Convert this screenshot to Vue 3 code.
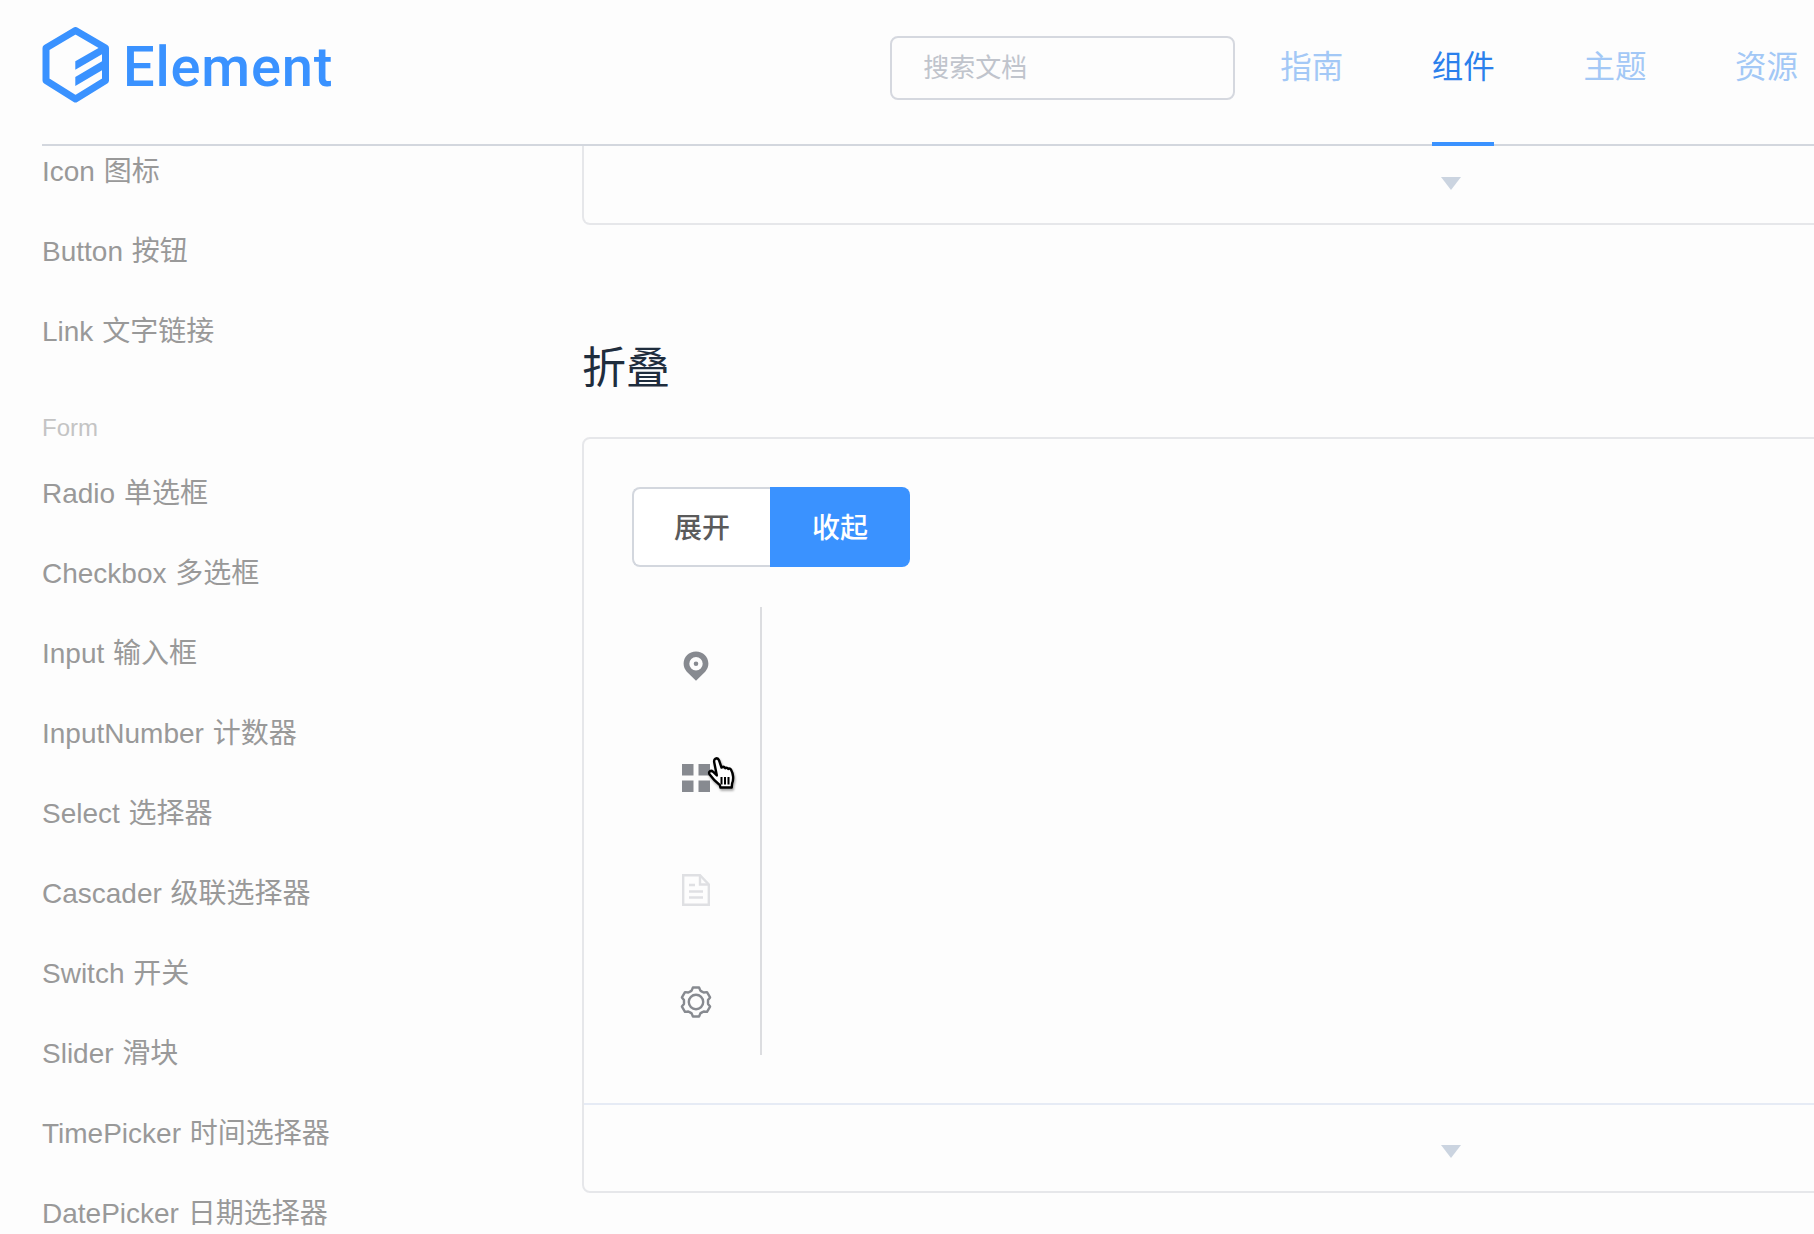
<script setup>
const before = ['Icon 图标', 'Button 按钮', 'Link 文字链接']
const form = ['Radio 单选框', 'Checkbox 多选框', 'Input 输入框', 'InputNumber 计数器', 'Select 选择器', 'Cascader 级联选择器', 'Switch 开关', 'Slider 滑块', 'TimePicker 时间选择器', 'DatePicker 日期选择器']
const nav = ['指南', '组件', '主题', '资源']
function gear() {
  const pts = []
  const n = 6
  for (let i = 0; i < n; i++) {
    const a = (i * 360) / n - 90
    const list = [[-30, 12], [-21, 12.2], [-12, 14.8], [12, 14.8], [21, 12.2]]
    for (const [d, r] of list) {
      const t = ((a + d) * Math.PI) / 180
      pts.push((16 + r * Math.cos(t)).toFixed(2) + ' ' + (16 + r * Math.sin(t)).toFixed(2))
    }
  }
  return 'M' + pts.join('L') + 'Z'
}
const gearPath = gear()
</script>

<template>
  <div class="page">
    <header class="header">
      <div class="logo">
        <svg class="hex" width="68" height="76" viewBox="42 27 68 76">
          <path d="M75.5 30.5 105.5 48V80.5L75.5 99 46 80.5V48Z" fill="none" stroke="#3a92ff" stroke-width="7" stroke-linejoin="round" />
          <path d="M75.3 61.3 102 46V54.3L75.3 69.7ZM75.3 77 102 61.3V70.3L75.3 86Z" fill="#3a92ff" />
        </svg>
        <span class="word">Element</span>
      </div>
      <div class="right">
        <div class="search">搜索文档</div>
        <nav class="nav">
          <a v-for="(n, i) in nav" :key="n" class="nav-item" :class="{ on: i === 1 }">{{ n }}</a>
        </nav>
      </div>
    </header>
    <div class="main">
      <aside class="side">
        <div class="list">
          <div v-for="t in before" :key="t" class="row">{{ t }}</div>
          <div class="group">Form</div>
          <div v-for="t in form" :key="t" class="row">{{ t }}</div>
        </div>
      </aside>
      <section class="content">
        <div class="card first">
          <div class="ctrl-top"><i class="arrow"></i></div>
        </div>
        <h3 class="title">折叠</h3>
        <div class="card">
          <div class="demo">
            <div class="btns">
              <div class="btn left">展开</div>
              <div class="btn active">收起</div>
            </div>
            <div class="menu">
              <div class="mi">
                <svg width="26" height="30" viewBox="0 0 26 30">
                  <path fill-rule="evenodd" fill="#878a90" d="M13 .5C6 .5.6 5.8.6 12.6c0 3.2 1.2 5.8 3.2 8.2L13 29.7l9.200-8.900c2-2.400 3.200-5 3.200-8.200C25.400 5.800 20 .5 13 .5ZM13 6a6.700 6.700 0 1 1 0 13.400A6.700 6.700 0 0 1 13 6ZM13 10.400a2.300 2.300 0 1 0 0 4.600 2.300 2.300 0 0 0 0-4.600Z" />
                </svg>
              </div>
              <div class="mi">
                <svg width="28" height="28" viewBox="0 0 28 28" fill="#878a90">
                  <rect x="0" y="0" width="11.500" height="11.500" />
                  <rect x="16.500" y="0" width="11.500" height="11.500" />
                  <rect x="0" y="16.500" width="11.500" height="11.500" />
                  <rect x="16.500" y="16.500" width="11.500" height="11.500" />
                </svg>
                <svg class="cursor" width="30" height="36" viewBox="0 0 30 34" preserveAspectRatio="none">
                  <path fill="#fff" stroke="#000" stroke-width="2.400" stroke-linejoin="round" d="M8.500 1.500c1.600-.6 3 .3 3.600 1.800l2.400 6.600 1-.4c1.200-.4 2.200.2 2.700 1.100 1-.6 2.300-.4 3 .6.900-.5 2.200-.2 2.800.8 1 1.700 1.900 4.400 2.100 6.600.2 2.400-.2 4.600-1 6.400l-.4 3.900H13.500l-.7-2.500C10.700 25 6 21 2.700 16.600c-1-1.300-.8-2.500.2-3.100 1-.6 2.300-.3 3.300.6l3.600 3.200L7.300 5.400c-.4-1.600 0-3.300 1.200-3.900Z" />
                  <path stroke="#000" stroke-width="2" d="M14.500 19v7M18 19v7M21.500 19v7" />
                </svg>
              </div>
              <div class="mi">
                <svg width="28" height="32" viewBox="0 0 28 32" fill="none" stroke="#dfe0e3" stroke-width="2.400">
                  <path d="M1.200 1.200H18L26.800 10.500V30.800H1.200Z" />
                  <path d="M18 1.200V10.500H26.800M7 11H13M7 17.500H21M7 23.500H21" />
                </svg>
              </div>
              <div class="mi">
                <svg width="32" height="32" viewBox="0 0 32 32" fill="none" stroke="#878a90" stroke-width="2.400">
                  <path :d="gearPath" stroke-linejoin="round" />
                  <circle cx="16" cy="16" r="7.200" />
                </svg>
              </div>
            </div>
          </div>
          <div class="ctrl"><i class="arrow"></i></div>
        </div>
      </section>
    </div>
  </div>
</template>

<style>
html, body { margin: 0; background: #fdfdfd; overflow: hidden; }
</style>

<style scoped>
.page {
  height: 1234px;
  overflow: hidden;
  background: #fdfdfd;
  font-family: "Liberation Sans", "Noto Sans CJK SC", sans-serif;
  display: flex;
  flex-direction: column;
}
.header {
  height: 146px;
  box-sizing: border-box;
  margin-left: 42px;
  border-bottom: 2px solid #d3d7de;
  display: flex;
  justify-content: space-between;
  padding-right: 17px;
  flex-shrink: 0;
}
.logo { display: flex; align-items: flex-start; padding-top: 27px; }
.hex { display: block; }
.word {
  font-family: Roboto, sans-serif;
  font-weight: 500;
  font-size: 56px;
  letter-spacing: 0.8px;
  line-height: 60px;
  margin-top: 10px;
  margin-left: 13px;
  color: #3a92ff;
}
.right { display: flex; align-items: flex-start; }
.search {
  width: 345px;
  height: 64px;
  box-sizing: border-box;
  margin-top: 36px;
  margin-right: 45px;
  padding-left: 31px;
  border: 2px solid #d5d8df;
  border-radius: 8px;
  font-size: 26px;
  line-height: 60px;
  color: #c0c4cc;
}
.nav { display: flex; gap: 89.6px; }
.nav-item {
  position: relative;
  display: block;
  width: 62px;
  height: 144px;
  font-size: 31.500px;
  line-height: 134px;
  color: #a3c8f6;
  white-space: nowrap;
}
.nav-item.on { color: #2b80ec; }
.nav-item.on::after {
  content: "";
  position: absolute;
  left: 0;
  right: 0;
  bottom: -2px;
  height: 4px;
  background: #3a92ff;
}
.main { flex: 1; min-height: 0; display: flex; }
.side {
  width: 582px;
  flex-shrink: 0;
  box-sizing: border-box;
  padding-left: 42px;
  overflow: hidden;
}
.list { margin-top: -14px; }
.row {
  height: 80px;
  line-height: 80px;
  font-size: 28px;
  word-spacing: 1px;
  color: #999;
  white-space: nowrap;
}
.group {
  height: 82px;
  box-sizing: border-box;
  padding-top: 30px;
  line-height: 52px;
  font-size: 24px;
  color: #c4c4c4;
}
.content { flex: 1; min-width: 0; overflow: hidden; }
.card {
  width: 1738px;
  box-sizing: border-box;
  border: 2px solid #e6e7ea;
  border-radius: 8px;
}
.first {
  height: 79px;
  border-top: 0;
  border-radius: 0 0 8px 8px;
}
.ctrl-top { height: 77px; display: flex; justify-content: center; padding-top: 31px; box-sizing: border-box; }
.title {
  margin: 0;
  height: 212px;
  box-sizing: border-box;
  padding-top: 112px;
  font-size: 44px;
  line-height: 64px;
  font-weight: 400;
  color: #1f2d3d;
}
.demo {
  padding: 48px;
  border-bottom: 2px solid #e6ebf5;
}
.btns { display: flex; height: 80px; margin-bottom: 40px; }
.btn {
  box-sizing: border-box;
  font-size: 28px;
  font-weight: 500;
  line-height: 80px;
  text-align: center;
}
.left {
  width: 138px;
  border: 2px solid #d3d7de;
  border-right: 0;
  border-radius: 8px 0 0 8px;
  color: #5a5a5a;
  background: #fff;
}
.active {
  width: 140px;
  line-height: 84px;
  border-radius: 0 8px 8px 0;
  background: #3a92ff;
  color: #fff;
}
.menu {
  width: 130px;
  height: 448px;
  padding-top: 3px;
  box-sizing: border-box;
  border-right: 2px solid #dcdde0;
}
.mi {
  position: relative;
  height: 112px;
  display: flex;
  align-items: center;
  justify-content: center;
}
.cursor {
  position: absolute;
  left: 75px;
  top: 35px;
  filter: drop-shadow(1px 2px 1px rgba(0, 0, 0, 0.35));
}
.ctrl {
  height: 86px;
  box-sizing: border-box;
  padding-top: 40px;
  display: flex;
  justify-content: center;
}
.arrow {
  display: block;
  width: 0;
  height: 0;
  border-left: 10px solid transparent;
  border-right: 10px solid transparent;
  border-top: 13px solid #cbd4e0;
}
</style>
